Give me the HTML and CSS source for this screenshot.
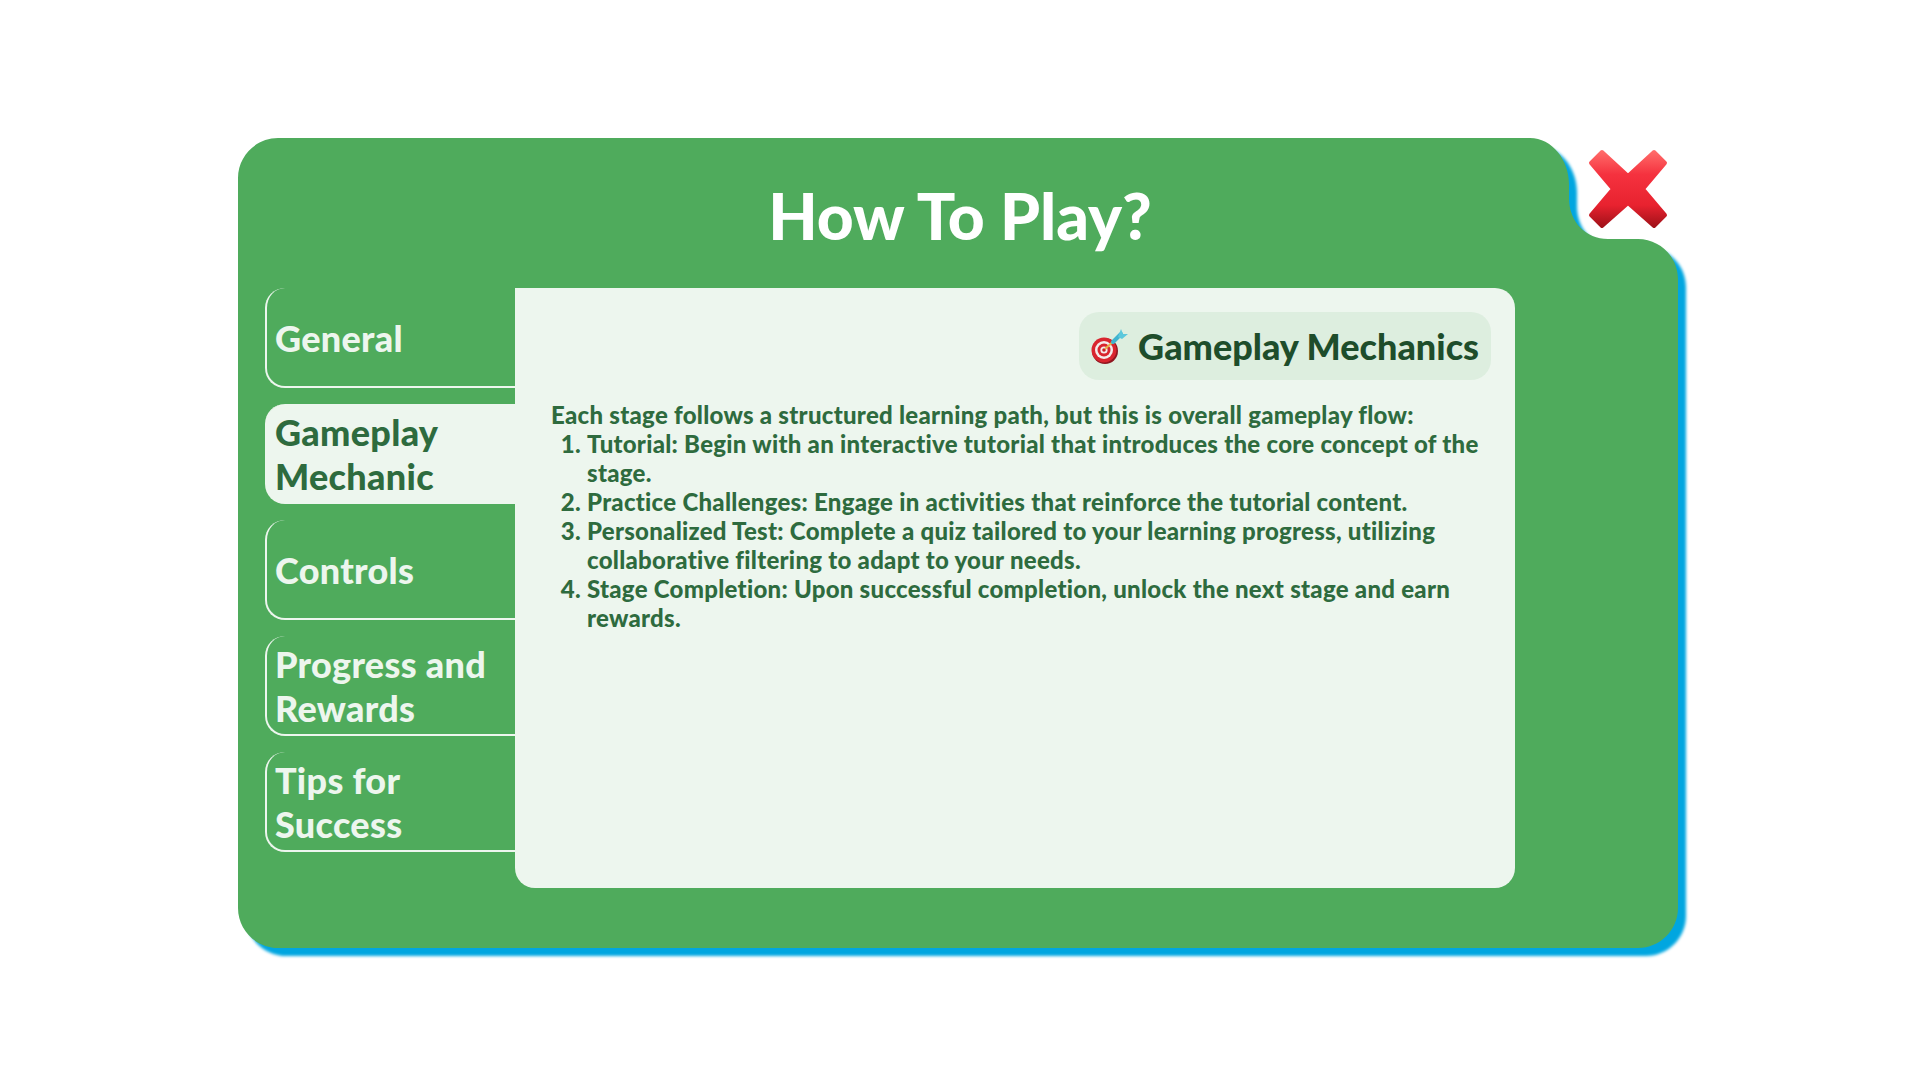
FILE: index.html
```html
<!DOCTYPE html>
<html lang="en">
<head>
    <meta charset="UTF-8">
    <meta name="viewport" content="width=device-width, initial-scale=1.0">
    <title>How To Play?</title>
    <link rel="stylesheet" href="styles.css">
</head>
<body>
    <div class="modal">
        <!-- panel outline with the notch for the close button -->
        <svg class="modal-shape" width="1450" height="825" viewBox="0 0 1450 825">
            <path fill="#4fab5c" d="M40 0H1292C1314 0 1331 22 1331 46V60C1331 84 1348 101 1370 101H1400C1422 101 1440 119 1440 141V770C1440 792 1422 810 1400 810H40C18 810 0 792 0 770V40C0 18 18 0 40 0Z"/>
        </svg>

        <button class="close-btn" type="button" aria-label="Close">
            <svg width="80" height="80" viewBox="0 0 80 80">
                <defs>
                    <linearGradient id="crossFill" x1="0" y1="0" x2="0" y2="1">
                        <stop offset="0" stop-color="#ff6a68"/>
                        <stop offset="0.3" stop-color="#f5323f"/>
                        <stop offset="0.72" stop-color="#e8222f"/>
                        <stop offset="1" stop-color="#a3121a"/>
                    </linearGradient>
                </defs>
                <path fill="url(#crossFill)" stroke="url(#crossFill)" stroke-width="4" stroke-linejoin="round" d="M14 3L40 27L66 3L77 14L55 40L77 66L66 77L40 54L14 77L3 66L25 40L3 14Z"/>
            </svg>
        </button>

        <h1 class="modal-title">How To Play?</h1>

        <div class="modal-body">
            <nav class="tabs">
                <div class="tab">General</div>
                <div class="tab tab-active">Gameplay Mechanic</div>
                <div class="tab">Controls</div>
                <div class="tab">Progress and Rewards</div>
                <div class="tab">Tips for Success</div>
            </nav>

            <section class="content">
                <div class="content-head">
                    <h2 class="pill">
                        <svg class="pill-icon" width="38" height="36" viewBox="0 0 38 36">
                            <circle cx="14" cy="23" r="13" fill="#8f1620"/>
                            <circle cx="13" cy="22" r="12.5" fill="#d9252f"/>
                            <circle cx="13" cy="22" r="9" fill="#f4ecec"/>
                            <circle cx="13" cy="22" r="6.5" fill="#d9252f"/>
                            <circle cx="13" cy="22" r="3.6" fill="#f4ecec"/>
                            <circle cx="13" cy="22" r="1.8" fill="#c9202a"/>
                            <path d="M14 21L26 10" stroke="#e6b24a" stroke-width="2"/>
                            <path d="M22 14L30 6" stroke="#3fb4cf" stroke-width="4" stroke-linecap="round"/>
                            <path d="M27 9L30 1L32 6L37 6L31 11Z" fill="#5cc8dc"/>
                        </svg>
                        Gameplay Mechanics
                    </h2>
                </div>
                <p class="intro">Each stage follows a structured learning path, but this is overall gameplay flow:</p>
                <ol class="steps">
                    <li>Tutorial: Begin with an interactive tutorial that introduces the core concept of the stage.</li>
                    <li>Practice Challenges: Engage in activities that reinforce the tutorial content.</li>
                    <li>Personalized Test: Complete a quiz tailored to your learning progress, utilizing collaborative filtering to adapt to your needs.</li>
                    <li>Stage Completion: Upon successful completion, unlock the next stage and earn rewards.</li>
                </ol>
            </section>
        </div>
    </div>
</body>
</html>
```

FILE: styles.css
```css
/* Page */
body {
    margin: 0;
    background: #fff;
    font-family: "Lato", "Noto Sans", sans-serif;
    font-weight: 900;
    min-height: 100vh;
    overflow: hidden;
}

/* Modal */
.modal {
    position: relative;
    box-sizing: border-box;
    width: 1444px;
    height: 812px;
    margin: 138px auto 0;
    padding-top: 42px;
}
.modal-shape {
    position: absolute;
    top: 0;
    left: 0;
    filter: drop-shadow(8px 8px 1.5px #00a6e0);
}
.close-btn {
    position: absolute;
    top: 11px;
    left: 1350px;
    padding: 0;
    border: none;
    background: none;
    line-height: 0;
    cursor: pointer;
}
.modal-title {
    position: relative;
    margin: 0 0 36px;
    color: #fff;
    font-size: 64px;
    font-weight: 900;
    line-height: 72px;
    text-align: center;
}
.modal-body {
    position: relative;
    display: flex;
    padding-left: 27px;
}

/* Side tabs */
.tabs {
    display: flex;
    flex-direction: column;
    gap: 16px;
    width: 250px;
}
.tab {
    box-sizing: border-box;
    display: flex;
    align-items: center;
    height: 100px;
    padding: 2px 8px 0;
    border-left: 2px solid #edf6ee;
    border-bottom: 2px solid #edf6ee;
    border-radius: 20px 0 0 20px;
    color: #edf6ee;
    font-size: 36px;
    letter-spacing: 0.3px;
    line-height: 44px;
}
.tab-active {
    background: #edf6ee;
    color: #2e6b3e;
}

/* Content card */
.content {
    box-sizing: border-box;
    width: 1000px;
    height: 600px;
    padding: 24px 24px 0 36px;
    background: #edf6ee;
    border-radius: 0 20px 20px 0;
    border-bottom-left-radius: 20px;
    color: #2e6b3e;
    font-size: 24px;
    letter-spacing: 0.27px;
    line-height: 29px;
}
.content-head {
    display: flex;
    justify-content: flex-end;
    margin-bottom: 20px;
}
.pill {
    display: flex;
    align-items: center;
    gap: 9px;
    height: 68px;
    margin: 0;
    padding: 0 12px;
    background: #ddeedf;
    border-radius: 20px;
    color: #1e4d2b;
    font-size: 36px;
    font-weight: 900;
    letter-spacing: 0;
}
.pill-icon {
    flex: none;
}
.intro {
    margin: 0;
}
.steps {
    margin: 0;
    padding: 0 0 0 36px;
}
```
